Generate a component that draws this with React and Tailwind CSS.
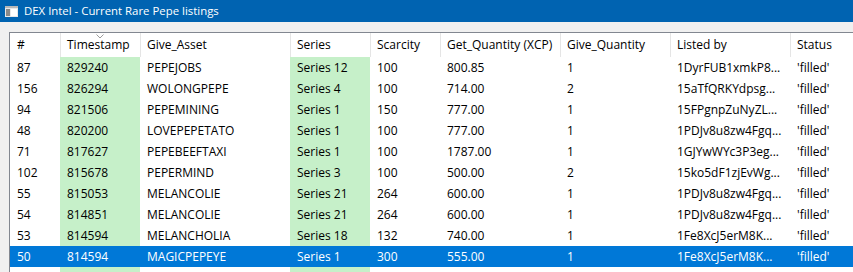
import React from "react";

const rows = [
  ["87", "829240", "PEPEJOBS", "Series 12", "100", "800.85", "1", "1DyrFUB1xmkP8...", "'filled'"],
  ["156", "826294", "WOLONGPEPE", "Series 4", "100", "714.00", "2", "15aTfQRKYdpsg...", "'filled'"],
  ["94", "821506", "PEPEMINING", "Series 1", "150", "777.00", "1", "15FPgnpZuNyZL...", "'filled'"],
  ["48", "820200", "LOVEPEPETATO", "Series 1", "100", "777.00", "1", "1PDJv8u8zw4Fgq...", "'filled'"],
  ["71", "817627", "PEPEBEEFTAXI", "Series 1", "100", "1787.00", "1", "1GJYwWYc3P3eg...", "'filled'"],
  ["102", "815678", "PEPERMIND", "Series 3", "100", "500.00", "2", "15ko5dF1zjEvWg...", "'filled'"],
  ["55", "815053", "MELANCOLIE", "Series 21", "264", "600.00", "1", "1PDJv8u8zw4Fgq...", "'filled'"],
  ["54", "814851", "MELANCOLIE", "Series 21", "264", "600.00", "1", "1PDJv8u8zw4Fgq...", "'filled'"],
  ["53", "814594", "MELANCHOLIA", "Series 18", "132", "740.00", "1", "1Fe8XcJ5erM8K...", "'filled'"],
  ["50", "814594", "MAGICPEPEYE", "Series 1", "300", "555.00", "1", "1Fe8XcJ5erM8K...", "'filled'"],
];

const headers = ["#", "Timestamp", "Give_Asset", "Series", "Scarcity", "Get_Quantity (XCP)", "Give_Quantity", "Listed by", "Status"];
const green = [false, true, false, true, false, false, false, false, false];
const cols = "grid grid-cols-[50px_80px_150px_80px_70px_120px_110px_120px_100px]";

export default function App() {
  return (
    <div className="w-[853px] h-[272px] overflow-hidden bg-[#f0f0f0] text-[12px] text-black" style={{ fontFamily: '"Open Sans", "Noto Sans", sans-serif' }}>
      <div className="h-[22px] bg-[#0063b1] flex items-center pl-[5px] gap-[6px] text-white">
        <svg width="13" height="11" viewBox="0 0 13 11">
          <rect x="0" y="0" width="13" height="11" fill="#e8e8e8" />
          <rect x="0" y="0" width="13" height="2" fill="#b8b8b8" />
          <rect x="1" y="3" width="4" height="7" fill="#8a8a8a" />
          <rect x="6" y="3" width="6" height="7" fill="#ffffff" />
        </svg>
        <span className="leading-none text-[11.4px]">DEX Intel - Current Rare Pepe listings</span>
      </div>
      <div className="pt-[10px] pl-[9px]">
        <div className="border-t border-l border-[#828790] bg-white w-[900px] h-[240px]">
          <div className={`${cols} h-[24px]`}>
            {headers.map((h, i) => (
              <div key={i} className={`relative flex items-center whitespace-nowrap overflow-hidden ${i === 0 ? "pl-[7px]" : "pl-[6px] border-l border-[#e5e5e5]"}`}>
                {i === 1 && (
                  <svg className="absolute left-[35px] top-[1px]" width="8" height="5" viewBox="0 0 8 5">
                    <polyline points="0.5,0.5 4,4 7.5,0.5" fill="none" stroke="#9a9a9a" strokeWidth="1" />
                  </svg>
                )}
                {h}
              </div>
            ))}
          </div>
          {rows.map((r, ri) => {
            const sel = ri === rows.length - 1;
            return (
              <div key={ri} className={`${cols} h-[21px] ${sel ? "bg-[#0078d7] text-white" : ""}`}>
                {r.map((c, ci) => (
                  <div key={ci} className={`flex items-center pl-[7px] whitespace-nowrap overflow-hidden ${green[ci] && !sel ? "bg-[#c6f0c9]" : ""}`}>
                    {c}
                  </div>
                ))}
              </div>
            );
          })}
          <div className={`${cols} h-[10px]`}>
            {green.map((g, i) => (
              <div key={i} className={g ? "bg-[#c6f0c9]" : ""} />
            ))}
          </div>
        </div>
      </div>
    </div>
  );
}
